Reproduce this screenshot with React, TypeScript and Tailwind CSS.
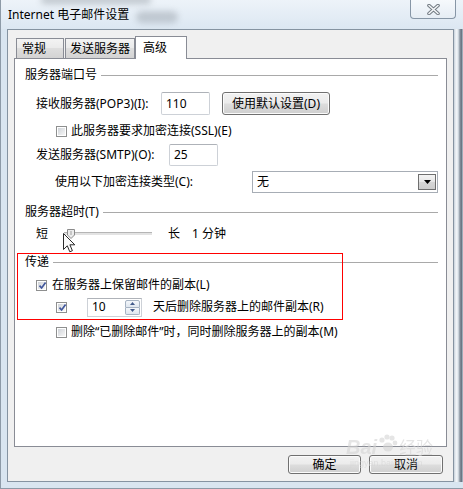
import React from 'react';

// small Win7-style checkbox
const Box = ({ checked = false }: { checked?: boolean }) => (
  <span className="relative w-[11px] h-[11px] shrink-0 border border-[#8e8f8f] bg-white p-[1px] flex">
    <span className="flex-1 bg-[linear-gradient(135deg,#cfd3d8,#f7f7f7)]" />
    {checked && (
      <svg className="absolute left-[1px] top-[0px]" width="9" height="9" viewBox="0 0 9 9">
        <path d="M1.5 4.6 L3.6 7 L7.6 1.6" fill="none" stroke="#41579c" strokeWidth="1.7" />
      </svg>
    )}
  </span>
);

const Header = ({ title }: { title: string }) => (
  <div className="h-[16px] flex items-center">
    <span className="whitespace-nowrap">{title}</span>
    <div className="flex-1 h-px ml-[4px] bg-[#a9a9a9]" />
  </div>
);

const winBtn =
  'rounded-[3px] border border-[#707070] bg-[linear-gradient(#f2f2f2,#ebebeb_48%,#dddddd_52%,#cfcfcf)] shadow-[inset_0_0_0_1px_#fbfbfb] flex items-center justify-center';

export default function App() {
  return (
    <div className="w-[463px] h-[489px] flex flex-col relative overflow-hidden bg-[#d9e5f0] border-l border-b border-[#8d9aa7] text-[12px] leading-[16px] text-black font-['Noto_Sans','Noto_Sans_CJK_SC',sans-serif]">
      {/* title bar */}
      <div className="h-[29px] shrink-0 flex items-start relative bg-[linear-gradient(#edf3f9,#dce7f2)]">
        <div className="absolute left-[40px] top-[-4px] w-[110px] h-[8px] bg-[#7d858d] opacity-40 blur-[3px] rounded-full" />
        <div className="absolute left-[135px] top-[11px] w-[42px] h-[12px] bg-[#6d757d] opacity-30 blur-[3px] rounded-full" />
        <span className="relative pl-[7px] pt-[7px] whitespace-nowrap">Internet 电子邮件设置</span>
        <div className="ml-auto mr-[7px] w-[46px] h-[19px] rounded-b-[4px] border border-t-0 border-[#8796a6] bg-[linear-gradient(#f6f9fc,#e6edf4)] flex items-center justify-center">
          <svg width="13" height="11" viewBox="0 0 13 11">
            <path d="M2 1.5 L11 9.5 M11 1.5 L2 9.5" stroke="#727a82" strokeWidth="3.6" strokeLinecap="round" />
            <path d="M2 1.5 L11 9.5 M11 1.5 L2 9.5" stroke="#f4f6f8" strokeWidth="1.6" strokeLinecap="round" />
          </svg>
        </div>
      </div>

      <div className="flex flex-1 min-h-0">
        <div className="w-[6px] shrink-0" />

        {/* client area */}
        <div className="flex-1 flex flex-col bg-[#f0f0f0] border border-[#8593a1] pt-[6px] px-[6px] pb-[7px]">
          {/* tabs */}
          <div className="relative z-10 h-[22px] flex items-end pl-[2px]">
            <div className="w-[48px] h-[20px] border border-b-0 border-[#898c95] bg-[linear-gradient(#f3f3f3,#ebebeb_45%,#dedede_50%,#d3d3d3)] flex items-center pl-[5px] pt-[1px]">
              常规
            </div>
            <div className="w-[70px] h-[20px] ml-[1px] border border-b-0 border-[#898c95] bg-[linear-gradient(#f3f3f3,#ebebeb_45%,#dedede_50%,#d3d3d3)] flex items-center pl-[4px] pt-[1px]">
              发送服务器
            </div>
            <div className="w-[52px] h-[23px] -mb-[1px] border border-b-0 border-[#898c95] bg-white flex items-center pl-[7px]">
              高级
            </div>
          </div>

          {/* panel */}
          <div className="flex-1 relative bg-white border border-[#898c95] pt-[8px] pl-[10px] pr-[8px] flex flex-col">
            <Header title="服务器端口号" />

            <div className="mt-[9px] h-[23px] flex items-center pl-[11px]">
              <span className="w-[125px] whitespace-nowrap">接收服务器(POP3)(I):</span>
              <div className="w-[49px] h-[23px] border border-[#cdd1d7] border-t-[#aeb2b8] rounded-[2px] bg-white flex items-center pl-[4px]">
                110
              </div>
              <div className={`ml-[12px] w-[108px] h-[23px] ${winBtn}`}>使用默认设置(D)</div>
            </div>

            <div className="mt-[8px] h-[16px] flex items-center pl-[31px]">
              <Box />
              <span className="ml-[4px] whitespace-nowrap">此服务器要求加密连接(SSL)(E)</span>
            </div>

            <div className="mt-[5px] h-[22px] flex items-center pl-[11px]">
              <span className="w-[133px] whitespace-nowrap">发送服务器(SMTP)(O):</span>
              <div className="w-[49px] h-[22px] border border-[#cdd1d7] border-t-[#aeb2b8] rounded-[2px] bg-white flex items-center pl-[4px]">
                25
              </div>
            </div>

            <div className="mt-[5px] h-[22px] flex items-center pl-[30px]">
              <span className="w-[197px] whitespace-nowrap">使用以下加密连接类型(C):</span>
              <div className="w-[186px] h-[22px] border border-[#a7adb5] bg-white flex items-center pl-[4px] pr-[1px]">
                <span>无</span>
                <div className="ml-auto w-[18px] h-[16px] border border-[#6f6f6f] bg-[linear-gradient(#f4f4f4,#e6e6e6_50%,#d6d6d6_52%,#cdcdcd)] flex items-center justify-center">
                  <svg width="7" height="4" viewBox="0 0 7 4">
                    <path d="M0 0 H7 L3.5 4 Z" fill="#000" />
                  </svg>
                </div>
              </div>
            </div>

            <div className="mt-[11px]">
              <Header title="服务器超时(T)" />
            </div>

            <div className="mt-[6px] h-[16px] flex items-center pl-[11px]">
              <span>短</span>
              <div className="relative ml-[16px] w-[88px] h-[3px] border-t border-[#b5b5b5] bg-[#e3e3e3] -mt-[2px]">
                <svg className="absolute left-[3px] top-[-4px]" width="9" height="10" viewBox="0 0 9 10">
                  <path d="M0.5 0.5 H7.5 V6 L4 9.5 L0.5 6 Z" fill="#ececec" stroke="#8a8a8a" />
                  <path d="M4 2 V6" stroke="#a0a0a0" />
                </svg>
              </div>
              <span className="ml-[16px]">长</span>
              <span className="ml-[12px] whitespace-nowrap">1 分钟</span>
            </div>

            <div className="mt-[12px]">
              <Header title="传递" />
            </div>

            <div className="mt-[7px] h-[16px] flex items-center pl-[11px]">
              <Box checked />
              <span className="ml-[5px] whitespace-nowrap">在服务器上保留邮件的副本(L)</span>
            </div>

            <div className="mt-[4px] h-[20px] flex items-center pl-[31px]">
              <Box checked />
              <div className="ml-[20px] w-[55px] h-[19px] border border-[#cdd1d7] border-t-[#aeb2b8] bg-white flex items-center pl-[4px] pr-[1px]">
                <span>10</span>
                <div className="ml-auto w-[15px] h-[15px] flex flex-col">
                  <div className="flex-1 border border-[#a6b3c3] rounded-t-[2px] bg-[linear-gradient(#f4f7fb,#dfe6ef)] flex items-center justify-center">
                    <svg width="5" height="3" viewBox="0 0 5 3">
                      <path d="M0 3 H5 L2.5 0 Z" fill="#40598a" />
                    </svg>
                  </div>
                  <div className="flex-1 border border-t-0 border-[#a6b3c3] rounded-b-[2px] bg-[linear-gradient(#f4f7fb,#dfe6ef)] flex items-center justify-center">
                    <svg width="5" height="3" viewBox="0 0 5 3">
                      <path d="M0 0 H5 L2.5 3 Z" fill="#40598a" />
                    </svg>
                  </div>
                </div>
              </div>
              <span className="ml-[11px] whitespace-nowrap">天后删除服务器上的邮件副本(R)</span>
            </div>

            <div className="mt-[7px] h-[16px] flex items-center pl-[31px]">
              <Box />
              <span className="ml-[4px] whitespace-nowrap">删除“已删除邮件”时，同时删除服务器上的副本(M)</span>
            </div>

            {/* red annotation frame */}
            <div className="absolute left-[2px] top-[194px] w-[326px] h-[67px] border border-[#ff0000] pointer-events-none" />

            {/* mouse cursor */}
            <svg className="absolute left-[48px] top-[174px]" width="13" height="20" viewBox="0 0 13 20">
              <path
                d="M0.5 0.5 L0.5 16.5 L4.3 12.8 L6.8 18.8 L9.4 17.7 L6.9 11.8 L11.8 11.8 Z"
                fill="#fbfbfb"
                stroke="#2a2a2a"
                strokeLinejoin="round"
              />
            </svg>
          </div>

          {/* dialog buttons */}
          <div className="mt-[8px] h-[19px] flex justify-end gap-[8px] pr-[4px]">
            <div className={`w-[73px] h-[19px] ${winBtn}`}>确定</div>
            <div className={`w-[74px] h-[19px] ${winBtn}`}>取消</div>
          </div>
        </div>

        <div className="w-[9px] shrink-0 bg-[linear-gradient(to_right,#c7d1da,#f3f6f9_25%,#dfe6ec_45%,#8d98a4_65%,#65717e_82%,#b8c6d3)]" />
      </div>

      <div className="h-[6px] shrink-0" />

      {/* watermark */}
      <div className="absolute left-[345px] top-[436px] flex flex-col items-start opacity-60 pointer-events-none text-[#d4d4d4]">
        <div className="flex items-center">
          <span className="text-[20px] leading-[22px] font-bold italic font-['Liberation_Sans',sans-serif]">Bai</span>
          <svg width="22" height="20" viewBox="0 0 22 20" className="-mt-[6px]">
            <circle cx="5" cy="6" r="2.6" fill="#d4d4d4" />
            <circle cx="10" cy="3" r="2.6" fill="#d4d4d4" />
            <circle cx="15" cy="4" r="2.6" fill="#d4d4d4" />
            <circle cx="18" cy="9" r="2.4" fill="#d4d4d4" />
            <ellipse cx="11" cy="13" rx="5" ry="4.5" fill="#d4d4d4" />
          </svg>
          <span className="text-[17px] leading-[20px] font-['Noto_Sans_CJK_SC',sans-serif]">经验</span>
        </div>
        <span className="text-[9px] leading-[10px] pl-[4px] font-['Liberation_Sans',sans-serif]">jingyan.baidu.com</span>
      </div>
    </div>
  );
}
